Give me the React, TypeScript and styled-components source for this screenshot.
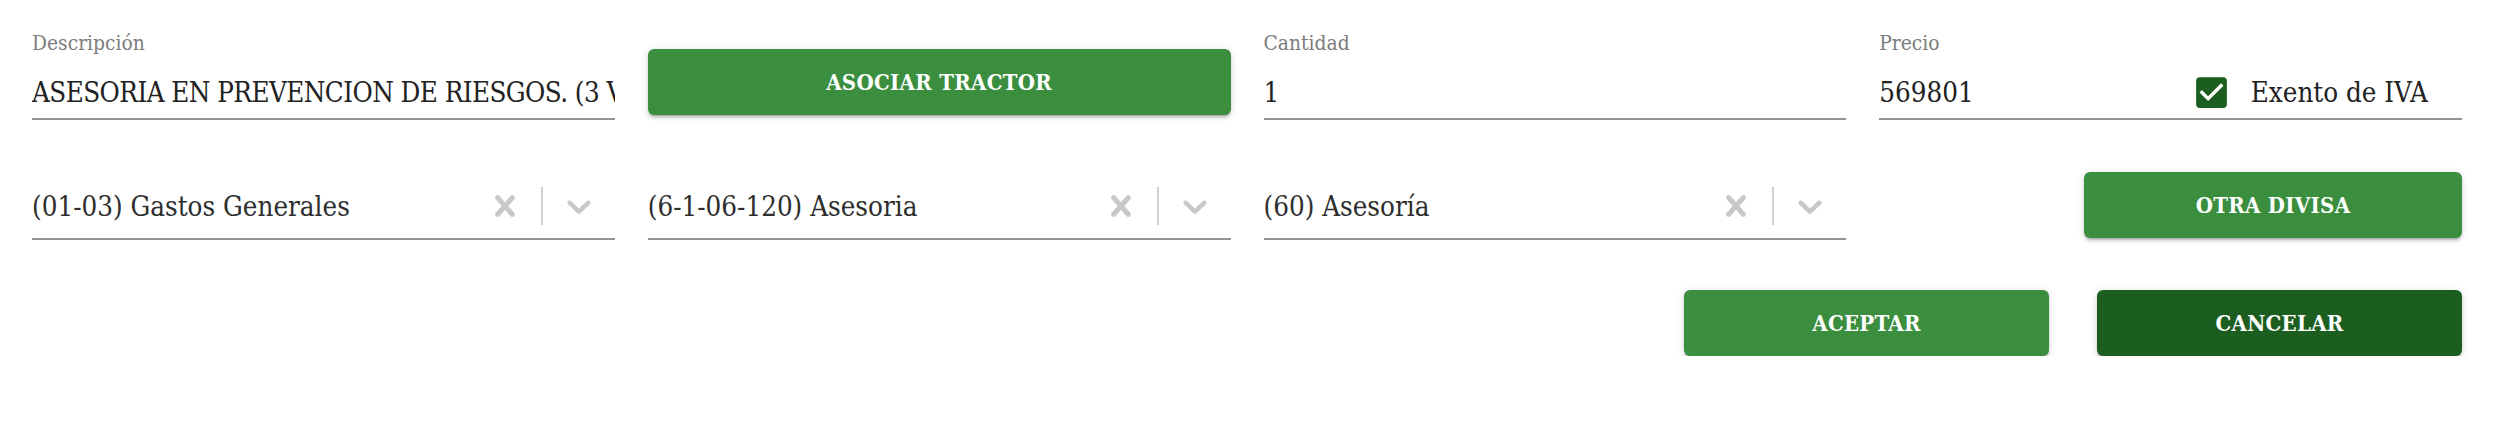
import React from "react";
import styled, { createGlobalStyle } from "styled-components";

const GlobalStyle = createGlobalStyle`
  html, body {
    margin: 0;
    padding: 0;
    background: #ffffff;
  }
  body {
    font-family: "DejaVu Serif Condensed", "DejaVu Serif", serif;
    font-stretch: semi-condensed;
  }
  * { box-sizing: border-box; }
`;

const Page = styled.div`
  padding: 29px 40px 0 32px;
`;

const FormGrid = styled.div`
  display: grid;
  grid-template-columns: repeat(4, minmax(0, 1fr));
  column-gap: 33px;
  row-gap: 52px;
  align-items: start;
`;

const Field = styled.div`
  display: flex;
  flex-direction: column;
  min-width: 0;
`;

const Label = styled.label`
  height: 28px;
  font-size: 20.8px;
  line-height: 28px;
  color: #7d7d7d;
`;

const InputLine = styled.div`
  display: flex;
  align-items: center;
  margin-top: 16px;
  height: 47px;
  padding-bottom: 7px;
  border-bottom: 2px solid #959595;
`;

const Value = styled.div<{ $tight?: boolean }>`
  flex: 1;
  min-width: 0;
  font-size: 27.5px;
  line-height: 38px;
  letter-spacing: ${(p) => (p.$tight ? "-0.55px" : "normal")};
  color: #212121;
  white-space: nowrap;
  overflow: hidden;
`;

const Adornment = styled.div`
  display: flex;
  align-items: center;
  gap: 24px;
  padding-right: 34px;
  flex-shrink: 0;
`;

const CheckIcon = styled.svg`
  width: 41px;
  height: 41px;
  margin: -5px;
  display: block;
`;

const CheckText = styled.span`
  font-size: 27.5px;
  line-height: 38px;
  color: #212121;
  white-space: nowrap;
`;

const Button = styled.button<{ $tone?: "primary" | "dark"; $width?: string; $offset?: number }>`
  display: flex;
  align-items: center;
  justify-content: center;
  height: 66px;
  width: ${(p) => p.$width ?? "100%"};
  margin-top: ${(p) => p.$offset ?? 0}px;
  justify-self: end;
  border: none;
  border-radius: 6px;
  background: ${(p) => (p.$tone === "dark" ? "#1c5e20" : "#3a8e3e")};
  color: #ffffff;
  font-family: inherit;
  font-stretch: inherit;
  font-weight: 700;
  font-size: 22px;
  letter-spacing: 0.3px;
  text-transform: uppercase;
  box-shadow: 0px 4px 2px -3px rgba(0, 0, 0, 0.2), 0px 3px 3px 0px rgba(0, 0, 0, 0.14),
    0px 1px 8px 0px rgba(0, 0, 0, 0.12);
  cursor: pointer;
`;

const SelectCell = styled.div`
  padding-top: 2px;
  min-width: 0;
`;

const SelectControl = styled.div`
  display: flex;
  align-items: center;
  height: 66px;
  border-bottom: 2px solid #959595;
`;

const SelectValue = styled.div`
  flex: 1;
  min-width: 0;
  font-size: 27.5px;
  line-height: 38px;
  color: #2e2e2e;
  white-space: nowrap;
  overflow: hidden;
`;

const IndicatorBox = styled.div`
  width: 72px;
  display: flex;
  align-items: center;
  justify-content: center;
  color: #c8c8c8;
`;

const Separator = styled.span`
  width: 2px;
  height: 38px;
  background: #d0d0d0;
`;

const Actions = styled.div`
  display: flex;
  justify-content: flex-end;
  gap: 48px;
  margin-top: 50px;
`;

const CrossIcon = () => (
  <svg width="42" height="42" viewBox="0 0 20 20" fill="currentColor">
    <path d="M14.348 14.849c-0.469 0.469-1.229 0.469-1.697 0l-2.651-3.030-2.651 3.029c-0.469 0.469-1.229 0.469-1.697 0-0.469-0.469-0.469-1.229 0-1.697l2.758-3.15-2.759-3.152c-0.469-0.469-0.469-1.228 0-1.697s1.228-0.469 1.697 0l2.652 3.031 2.651-3.031c0.469-0.469 1.228-0.469 1.697 0s0.469 1.229 0 1.697l-2.758 3.152 2.758 3.15c0.469 0.469 0.469 1.229 0 1.698z" />
  </svg>
);

const ChevronIcon = () => (
  <svg width="40" height="40" viewBox="0 0 20 20" fill="currentColor">
    <path d="M4.516 7.548c0.436-0.446 1.043-0.481 1.576 0l3.908 3.747 3.908-3.747c0.533-0.481 1.141-0.446 1.574 0 0.436 0.445 0.408 1.197 0 1.615-0.406 0.418-4.695 4.502-4.695 4.502-0.217 0.223-0.502 0.335-0.787 0.335s-0.57-0.112-0.789-0.335c0 0-4.287-4.084-4.695-4.502s-0.436-1.17 0-1.615z" />
  </svg>
);

const Select = ({ value }: { value: string }) => (
  <SelectCell>
    <SelectControl>
      <SelectValue>{value}</SelectValue>
      <IndicatorBox>
        <CrossIcon />
      </IndicatorBox>
      <Separator />
      <IndicatorBox>
        <ChevronIcon />
      </IndicatorBox>
    </SelectControl>
  </SelectCell>
);

export default function App() {
  return (
    <>
      <GlobalStyle />
      <Page>
        <FormGrid>
          <Field>
            <Label>Descripción</Label>
            <InputLine>
              <Value $tight>ASESORIA EN PREVENCION DE RIESGOS. (3 V</Value>
            </InputLine>
          </Field>
          <Button $offset={20}>Asociar tractor</Button>
          <Field>
            <Label>Cantidad</Label>
            <InputLine>
              <Value>1</Value>
            </InputLine>
          </Field>
          <Field>
            <Label>Precio</Label>
            <InputLine>
              <Value>569801</Value>
              <Adornment>
                <CheckIcon viewBox="0 0 24 24">
                  <path
                    fill="#1c5e20"
                    d="M19 3H5c-1.11 0-2 .9-2 2v14c0 1.1.89 2 2 2h14c1.11 0 2-.9 2-2V5c0-1.1-.89-2-2-2zm-9 14l-5-5 1.41-1.41L10 14.17l7.59-7.59L19 8l-9 9z"
                  />
                </CheckIcon>
                <CheckText>Exento de IVA</CheckText>
              </Adornment>
            </InputLine>
          </Field>

          <Select value="(01-03) Gastos Generales" />
          <Select value="(6-1-06-120) Asesoria" />
          <Select value="(60) Asesoría" />
          <Button $width="378px">Otra divisa</Button>
        </FormGrid>
        <Actions>
          <Button $width="365px">Aceptar</Button>
          <Button $width="365px" $tone="dark">
            Cancelar
          </Button>
        </Actions>
      </Page>
    </>
  );
}
